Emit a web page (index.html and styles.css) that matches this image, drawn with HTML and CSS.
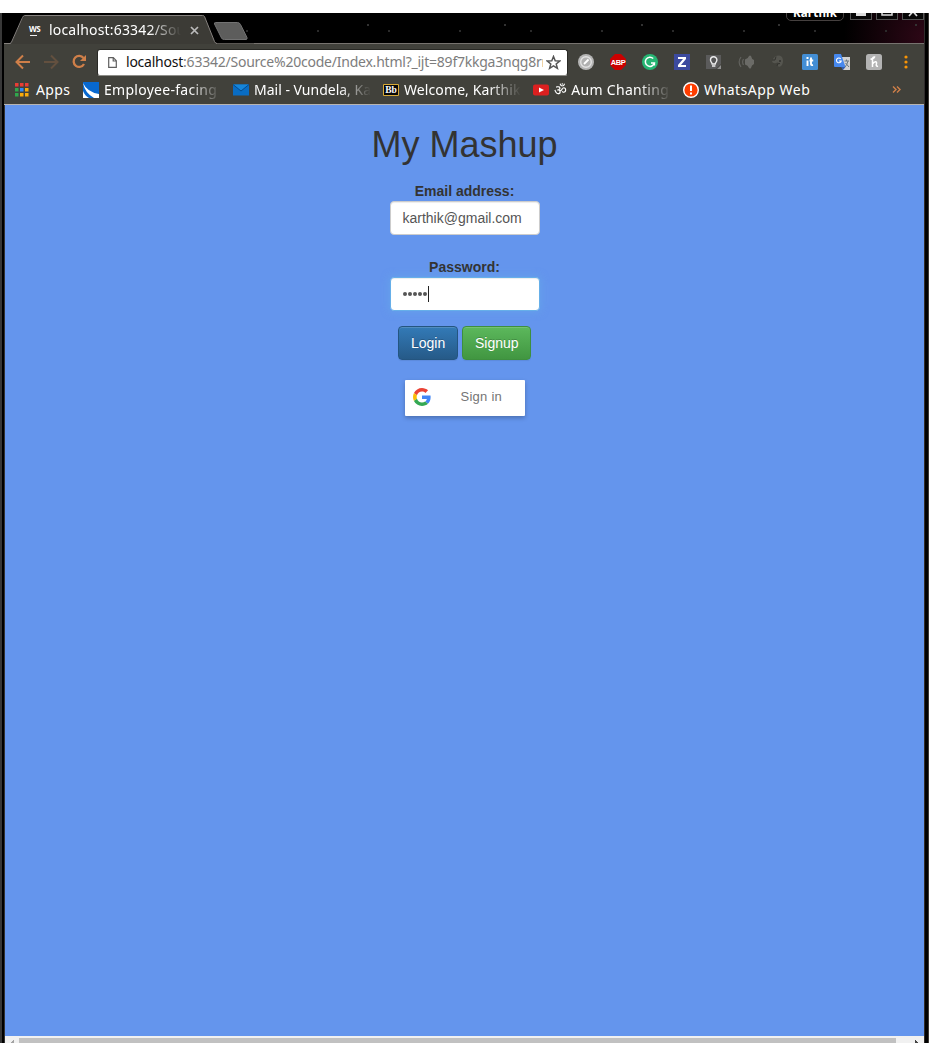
FILE: index.html
```
<!DOCTYPE html>
<html lang="en">
<head>
<meta charset="utf-8">
<title>My Mashup</title>
<link rel="stylesheet" href="styles.css">
</head>
<body>
<div class="window">
  <header class="chrome">
    <div class="tabstrip">
      <div class="tab">
        <svg class="tab-shape" width="250" height="31" viewBox="0 0 250 31"><path d="M0 30.500H7L19.500 3.500Q20 2.500 21 2.500H198.500Q200 2.500 200.500 3.500L210.500 28.500Q211.500 30.500 213 30.500H250V31H0Z" fill="#3c3b36"/><path d="M0 30.500H6Q7 30.500 8 28L18.500 4.500Q19.500 2.500 20.500 2.500H198.500Q200 2.500 200.500 3.500L210.500 28.500Q211.500 30.500 213 30.500" fill="none" stroke="#85817e"/><path d="M211.500 9.500H233.500Q235.500 9.500 236.500 11.500L243 24.500Q243.500 26.500 242 26.500H220.500Q218 26.500 217.500 25L210.500 11Q210 9.500 211.500 9.500Z" fill="#5d5d5c" stroke="#727272"/></svg>
        <span class="ws">WS</span>
        <span class="tab-title fade">localhost:63342/Sou</span>
        <svg class="tab-close" width="9" height="9" viewBox="0 0 9 9"><path d="M1 1L8 8M8 1L1 8" stroke="#bbb" stroke-width="1.700"/></svg>
      </div>
      <div class="window-controls">
        <span class="user">Karthik</span>
        <span class="ctl"><svg width="22" height="18"><path d="M6 12.500H16" stroke="#ddd" stroke-width="3"/></svg></span>
        <span class="ctl"><svg width="22" height="18"><path d="M6 6H16V13H6Z" fill="none" stroke="#ddd" stroke-width="1.500"/></svg></span>
        <span class="ctl"><svg width="22" height="18"><path d="M7 5L15 14M15 5L7 14" stroke="#ddd" stroke-width="1.700"/></svg></span>
      </div>
    </div>
    <div class="toolbar">
      <svg class="nav-icons" width="93" height="26" viewBox="0 0 93 26" fill="none" stroke-width="2"><path d="M26 13H13M19 6.500L12.500 13L19 19.500" stroke="#cf7f49"/><path d="M40 13H53M47 6.500L53.500 13L47 19.500" stroke="#63503f"/><path d="M79.500 9A5.500 5.500 0 1 0 80 15" stroke="#cf7f49" stroke-width="2.300"/><path d="M82 6V12H76Z" fill="#cf7f49"/></svg>
      <div class="omnibox">
        <svg width="9" height="12" viewBox="0 0 9 12"><path d="M.7.700H5.300L8.300 3.700V10.300H.7ZM5.200.700V4H8.300" fill="none" stroke="#5f5f5f" stroke-width="1.200"/></svg>
        <div class="url"><b>localhost</b>:63342/Source%20code/Index.html?_ijt=89f7kkga3nqg8rr</div>
        <svg class="star" width="15" height="15" viewBox="0 0 15 15"><path d="M7.500 1.500L9.200 5.700L13.700 6L10.200 8.900L11.400 13.300L7.500 10.900L3.600 13.300L4.800 8.900L1.300 6L5.800 5.700Z" fill="none" stroke="#555" stroke-width="1.500"/></svg>
      </div>
      <div class="extensions">
        <svg viewBox="0 0 16 16"><circle cx="8" cy="8" r="8" fill="#b5b5b5"/><circle cx="8" cy="8" r="5.300" fill="#b0b0b0" stroke="#e2e2e2" stroke-width="1.400"/><path d="M6 10L10.500 5.500" stroke="#fff" stroke-width="1.800"/></svg>
        <svg viewBox="0 0 16 16"><path d="M5 0H11L16 5V11L11 16H5L0 11V5Z" fill="#cb0000"/><text x="8" y="10.900" text-anchor="middle" class="abp">ABP</text></svg>
        <svg viewBox="0 0 16 16"><circle cx="8" cy="8" r="8" fill="#25b573"/><path d="M11.200 4.500A4.600 4.600 0 1 0 12.400 9H9M12.400 9V11.500" fill="none" stroke="#fff" stroke-width="1.500"/></svg>
        <svg viewBox="0 0 16 16"><path fill="#3c4a9f" d="M0 0H16V16H0Z"/><path d="M4 3H12V5L7 11H12V13H4V11L9 5H4Z" fill="#fff"/></svg>
        <svg viewBox="0 0 16 16"><path fill="#5b5b5b" d="M0 1H15V10L10 15H0Z"/><path d="M11 15L15 11V15Z" fill="#909090"/><path d="M6.200 10C6.200 8.500 4.500 8 4.500 6A3.200 3.200 0 0 1 10.900 6C10.900 8 9.200 8.500 9.200 10ZM6 12H9.400" fill="#555" stroke="#eee" stroke-width="1.400"/></svg>
        <svg viewBox="0 0 16 16"><path d="M7 5.500Q10 5 11 2Q12 .8 13 2Q13.500 5 16 6V10Q13.500 11 13 14Q12 15.200 11 14Q10 11 7 10.500Z" fill="#6b6b67"/><path d="M5.500 5Q3.700 8 5.500 11M3 3Q-.7 8 3 13" fill="none" stroke="#62625e" stroke-width="1.200"/></svg>
        <svg viewBox="0 0 16 16"><path d="M2 6L5 2.500Q9 .5 12 3Q14 7 12 11Q10 14 7.500 12Q7 10 9 9.500Q8 8 6 9Q2 10 2 6Z" fill="#55554f"/><path d="M2 6H5L6 2.500M7 12Q7 9 10 9.500" fill="none" stroke="#33332f"/><circle cx="10" cy="7" r="1" fill="#30302d"/></svg>
        <svg viewBox="0 0 16 16"><rect width="16" height="16" rx="1.500" fill="#438ed5"/><path d="M5.500 6.500V12M9 3.500V10Q9 11.500 11 11M7.500 6.500H11.200M4.500 4H6.500" fill="none" stroke="#fff" stroke-width="1.900"/></svg>
        <svg viewBox="0 0 16 16"><path d="M6 3H16V16H9Z" fill="#d1d1d1"/><path d="M1 0H7L11.500 13H1Q0 13 0 12V1Q0 0 1 0Z" fill="#4688ee"/><path d="M9 16L11.500 13H7Z" fill="#315eb0"/><path d="M6.700 4.800A2.400 2.400 0 1 0 7.200 7H5" fill="none" stroke="#fff" stroke-width="1.100"/><path d="M10.500 7H15M12.500 5.500V7M14 7Q13 11 11 13M11.500 9L15 13" fill="none" stroke="#687780"/></svg>
        <svg viewBox="0 0 16 16"><rect width="16" height="16" rx="2.500" fill="#b3b3b3"/><path d="M4.500 5.200Q8 4.500 8.500 3Q7 2.500 6.500 5V13M6.500 10Q8 7.500 9.800 7.700Q11 8 10.300 10.500Q10 12.700 12 12" fill="none" stroke="#fff" stroke-width="1.500"/></svg>
        <svg class="menu" viewBox="0 0 4 16" fill="#f89406"><circle cx="2" cy="3" r="1.600"/><circle cx="2" cy="8" r="1.600"/><circle cx="2" cy="13" r="1.600"/></svg>
      </div>
    </div>
    <nav class="bookmarks">
      <a class="apps"><svg viewBox="0 0 14 14" width="14" height="14"><path fill="#e93d35" d="M0 0H3.500V3.500H0ZM5 0H8.500V3.500H5ZM10 0H13.500V3.500H10Z"/><path fill="#30a74c" d="M0 5H3.500V8.500H0ZM0 10H3.500V13.500H0Z"/><path fill="#2f8af7" d="M5 5H8.500V8.500H5Z"/><path fill="#f9aa0b" d="M10 5H13.500V8.500H10ZM5 10H8.500V13.500H5ZM10 10H13.500V13.500H10Z"/></svg><span class="l-apps">Apps</span></a>
      <a><svg viewBox="0 0 16 16"><path fill="#0868cf" d="M0 0H16V16H0Z"/><path d="M0 1Q4 10 16 12V16H11Q2 11 0 1ZM0 9Q2 14 6 16H0Z" fill="#fff"/></svg><span class="fade l-emp">Employee-facing</span></a>
      <a><svg viewBox="0 0 16 16"><path fill="#0a6dc4" d="M0 2.500H16V13.500H0Z"/><path d="M0 2.500L8 9L16 2.500" fill="#1585da" stroke="#064b8c"/></svg><span class="fade l-mail">Mail - Vundela, Kar</span></a>
      <a><svg viewBox="0 0 16 16"><path d="M.5 2.500H15.500V13.500H.5Z" fill="#080808" stroke="#d9aa35"/><text x="8" y="11" text-anchor="middle" class="bb">Bb</text></svg><span class="fade l-wel">Welcome, Karthik</span></a>
      <a><svg viewBox="0 0 16 16"><rect y="2.500" width="16" height="11" rx="2" fill="#dc2020"/><path d="M6 5.500L11 8L6 10.500Z" fill="#fff"/></svg><span class="fade l-aum"><i class="om">ॐ</i> Aum Chanting</span></a>
      <a><svg viewBox="0 0 16 16"><circle cx="8" cy="8" r="7.300" fill="#ff3d00" stroke="#fff" stroke-width="1.400"/><path d="M7 3.500H9V9H7ZM7 10.500H9V12.500H7Z" fill="#fff"/></svg><span class="l-wa">WhatsApp Web</span></a>
      <svg class="more" viewBox="0 0 9 7"><path d="M1 .5L4 3.500L1 6.500M5 .5L8 3.500L5 6.500" fill="none" stroke="#cf7f49" stroke-width="1.400"/></svg>
    </nav>
  </header>
  <main class="page">
    <h1>My Mashup</h1>
    <form class="login">
      <label>Email address:</label>
      <div class="field">karthik@gmail.com</div>
      <label class="second">Password:</label>
      <div class="field focused"><span class="dots"><i></i><i></i><i></i><i></i><i></i></span><span class="caret"></span></div>
      <div class="actions"><button type="button" class="btn primary">Login</button><button type="button" class="btn success">Signup</button></div>
      <div class="google">
        <svg width="18" height="18" viewBox="0 0 48 48"><path fill="#EA4335" d="M24 9.500c3.540 0 6.710 1.220 9.210 3.600l6.850-6.850C35.900 2.380 30.470 0 24 0 14.620 0 6.510 5.380 2.560 13.220l7.980 6.190C12.430 13.720 17.740 9.500 24 9.500z"/><path fill="#4285F4" d="M46.980 24.550c0-1.570-.15-3.090-.38-4.550H24v9.020h12.940c-.58 2.960-2.260 5.480-4.780 7.180l7.730 6c4.510-4.180 7.090-10.360 7.090-17.650z"/><path fill="#FBBC05" d="M10.530 28.590c-.48-1.450-.76-2.990-.76-4.590s.27-3.140.76-4.590l-7.980-6.190C.92 16.460 0 20.120 0 24c0 3.880.92 7.540 2.560 10.780l7.970-6.190z"/><path fill="#34A853" d="M24 48c6.480 0 11.930-2.130 15.890-5.810l-7.730-6c-2.150 1.450-4.920 2.300-8.160 2.300-6.260 0-11.570-4.220-13.470-9.910l-7.980 6.190C6.510 42.620 14.620 48 24 48z"/></svg>
        <span>Sign in</span>
      </div>
    </form>
  </main>
  <footer class="scrollbar">
    <svg width="14" height="7"><path d="M9 4V7H6V6H7V5H8V4Z" fill="#a3a3a3"/></svg>
    <div class="thumb"></div>
    <svg width="28" height="7"><path d="M19 4H20V5H21V6H22V7H19Z" fill="#444"/></svg>
  </footer>
</div>
</body>
</html>
```
FILE: styles.css
```
* { box-sizing: border-box; }
body { margin: 0; background: #fff; overflow: hidden; font-family: "Liberation Sans", Arial, sans-serif; }
.window {
  margin-top: 13px; height: 1030px; padding: 0 5px; overflow: hidden;
  display: flex; flex-direction: column;
  background: linear-gradient(90deg, #383838 0 1.500px, #000 1.500px 4px, #333 4px 5px, transparent 5px 924px, #302c2c 924px 925px, #000 925px 928px, #3b3734 928px), #000;
}
.chrome { height: 92px; margin-left: -1px; color: #fff; font-family: "Noto Sans", sans-serif; }
.tabstrip {
  height: 30px; display: flex; justify-content: space-between;
  background:
    radial-gradient(circle at 90px 12px, #333 0 .7px, transparent 1px) 0 0 / 137px 23px,
    radial-gradient(circle at 30px 18px, #2b2b2b 0 .7px, transparent 1px) 0 0 / 71px 29px,
    radial-gradient(circle at 100% 80%, #2d0716, transparent 80px), #000;
}
.tab { display: grid; grid-template-columns: 25px 20px 132px 9px 10px; align-items: start; height: 31px; }
.tab > * { grid-row: 1; }
.tab-shape { grid-column: 1 / 2; margin-right: -225px; position: relative; z-index: 1; }
.ws { grid-column: 2; z-index: 1; width: 12px; height: 13px; margin-top: 10px; background: linear-gradient(#eee, #eee) 1px 100% / 7px 1px no-repeat; font: bold 8px/11px "Open Sans", sans-serif; letter-spacing: -.4px; }
.tab-title { grid-column: 3; z-index: 1; font-size: 14px; line-height: 20px; margin-top: 7px; letter-spacing: .18px; }
.tab-close { grid-column: 5; z-index: 1; margin-top: 13px; }
.fade { overflow: hidden; white-space: nowrap; -webkit-mask-image: linear-gradient(90deg, #000 calc(100% - 32px), transparent); mask-image: linear-gradient(90deg, #000 calc(100% - 32px), transparent); }
.window-controls { display: flex; gap: 4px; height: 18px; margin-top: -10px; }
.user { width: 58px; border: 1px solid #45403f; border-radius: 5px; text-align: center; font-weight: bold; font-size: 11.500px; line-height: 18px; margin-right: 2px; letter-spacing: .2px; }
.ctl { width: 22px; height: 17px; border: 1px solid #555; background: #070707; }
.ctl svg { display: block; margin: -2px -1px -1px; }
.toolbar { height: 34px; padding-top: 5px; display: flex; background: #41413b; border-top: 1px solid #77736f; }
.nav-icons { flex: none; }
.omnibox { width: 471px; height: 27px; flex: none; display: flex; align-items: center; padding: 0 5px 0 10px; background: #fff; border: 1px solid #292925; border-bottom-color: #8d8d88; border-radius: 3px; color: #7d7d7d; }
.omnibox > svg { flex: none; }
.url { flex: none; width: 417px; margin: -1px 0 0 9px; overflow: hidden; white-space: nowrap; font-size: 14px; line-height: 20px; letter-spacing: -.23px; }
.url b { color: #111; font-weight: normal; }
.star { margin-left: 3px; }
.extensions { display: flex; align-items: center; gap: 16px; padding-left: 10px; height: 26px; }
.extensions svg { width: 16px; height: 16px; flex: none; }
.extensions .menu { width: 4px; margin-left: 6px; }
.abp { font: bold 7.500px "Liberation Sans", sans-serif; fill: #fff; letter-spacing: -.5px; }
.bb { font: bold 9.500px "Liberation Serif", serif; fill: #fff; }
.bookmarks { height: 28px; display: flex; align-items: center; background: #41413b; border-bottom: 1px solid #b8b5b2; font-size: 14px; line-height: 20px; padding: 0 0 2px 11px; }
.bookmarks a { width: 150px; display: flex; align-items: center; gap: 5px; flex: none; white-space: nowrap; }
.bookmarks a > svg { width: 16px; height: 16px; flex: none; }
.bookmarks .apps { width: 68px; gap: 7px; }
.bookmarks .apps > svg { width: 14px; height: 14px; }
.bookmarks .fade { width: 117px; }
.l-apps { letter-spacing: .4px; }
.l-emp { letter-spacing: .28px; }
.l-wel { letter-spacing: .1px; }
.l-aum { letter-spacing: .3px; }
.l-wa { letter-spacing: .5px; }
.om { font: normal 14px "DejaVu Sans", sans-serif; }
.more { width: 9px; height: 7px; margin-left: 59px; }
.page { flex: 1; background: #6495ed; color: #333; text-align: center; }
h1 { margin: 20px 0 0; font-weight: normal; font-size: 36px; line-height: 40px; }
.login { display: flex; flex-direction: column; align-items: center; margin-top: 16px; font-size: 14px; line-height: 20px; }
label { font-weight: bold; }
.second { margin-top: 22px; }
.field { width: 150px; height: 34px; padding: 6px 12px; display: flex; align-items: center; background: #fff; border: 1px solid #ccc; border-radius: 4px; color: #555; box-shadow: inset 0 1px 1px rgba(0,0,0,.075); }
.focused { border-color: #66afe9; box-shadow: inset 0 1px 1px rgba(0,0,0,.075), 0 0 8px rgba(102,175,233,.6); }
.dots { display: flex; gap: 1px; }
.dots i { width: 4px; height: 4px; border-radius: 50%; background: #555; }
.caret { width: 1px; height: 16px; margin-left: 1px; background: #222; }
.actions { display: flex; gap: 4px; margin-top: 15px; }
.btn { height: 34px; padding: 0 12px; border: 1px solid #245580; border-radius: 4px; color: #fff; font: 14px/20px "Liberation Sans", Arial, sans-serif; text-shadow: 0 -1px 0 rgba(0,0,0,.2); box-shadow: inset 0 1px 0 rgba(255,255,255,.15), 0 1px 1px rgba(0,0,0,.075); }
.primary { width: 60px; background: linear-gradient(#337ab7, #265a88); }
.success { width: 69px; background: linear-gradient(#5cb85c, #419641); border-color: #3e8f3e; }
.google { width: 120px; height: 36px; margin-top: 20px; padding: 0 8px 2px; display: flex; align-items: center; background: #fff; border-radius: 1px; box-shadow: 0 2px 4px rgba(0,0,0,.25); color: #757575; font-size: 13px; letter-spacing: .25px; }
.google span { margin: -1px 0 0 30px; }
.scrollbar { height: 7px; display: flex; background: #f1f1f1; }
.thumb { flex: 1; margin-top: 2px; background: #c1c1c1; }
```
